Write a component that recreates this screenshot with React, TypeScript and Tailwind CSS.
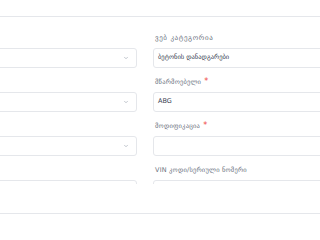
import React from "react";

function Chevron() {
  return (
    <svg width="6" height="6" viewBox="0 0 24 24" fill="none" stroke="#9ca3af" strokeWidth="2.5" strokeLinecap="round" strokeLinejoin="round">
      <path d="m6 9 6 6 6-6" />
    </svg>
  );
}

function Label({ text, req, wide }: { text: string; req?: boolean; wide?: boolean }) {
  return (
    <div className={`h-[12px] mb-[4px] leading-[12px] text-[#6b7280] whitespace-nowrap pl-[2px] ${wide ? "text-[7px] tracking-[0.6px]" : "text-[6.5px] tracking-[0.2px]"}`}>
      {text}
      {req && <span className="text-[#ef4444] ml-[3px] text-[8px]">*</span>}
    </div>
  );
}

function Select() {
  return (
    <div className="h-[20px] border border-[#e5e7eb] rounded-[3px] flex items-center justify-end pr-[7px] bg-white">
      <Chevron />
    </div>
  );
}

function Input({ value }: { value?: string }) {
  return (
    <div className="h-[20px] border border-[#e5e7eb] rounded-[3px] flex items-center pl-[4px] text-[6.5px] text-[#374151] bg-white whitespace-nowrap">
      {value}
    </div>
  );
}

export default function App() {
  const rows: { label: string; req?: boolean; value?: string; wide?: boolean }[] = [
    { label: "ვებ კატეგორია", value: "ბეტონის დანადგარები", wide: true },
    { label: "მწარმოებელი", req: true, value: "ABG" },
    { label: "მოდიფიკაცია", req: true },
    { label: "VIN კოდი/სერიული ნომერი" },
  ];
  return (
    <div className="w-[320px] h-[240px] overflow-hidden bg-white relative" style={{ fontFamily: '"DejaVu Sans", "Noto Sans", sans-serif' }}>
      <div className="h-[17px] border-b border-[#e5e7eb]" />
      <div className="h-[167px] overflow-hidden pt-[15px]">
        <div className="flex flex-col gap-[8px] ml-[-100px]">
          {rows.map((r, i) => (
            <div key={i} className="flex gap-[16px]">
              <div className="w-[237px] shrink-0">
                <div className="h-[12px] mb-[4px]" />
                {i < 3 ? <Select /> : <div className="h-[20px] border border-[#e5e7eb] rounded-[3px]" />}
              </div>
              <div className="w-[237px] shrink-0">
                <Label text={r.label} req={r.req} wide={r.wide} />
                <Input value={r.value} />
              </div>
            </div>
          ))}
        </div>
      </div>
      <div className="mt-[29px] border-t border-[#e5e7eb]" />
    </div>
  );
}
